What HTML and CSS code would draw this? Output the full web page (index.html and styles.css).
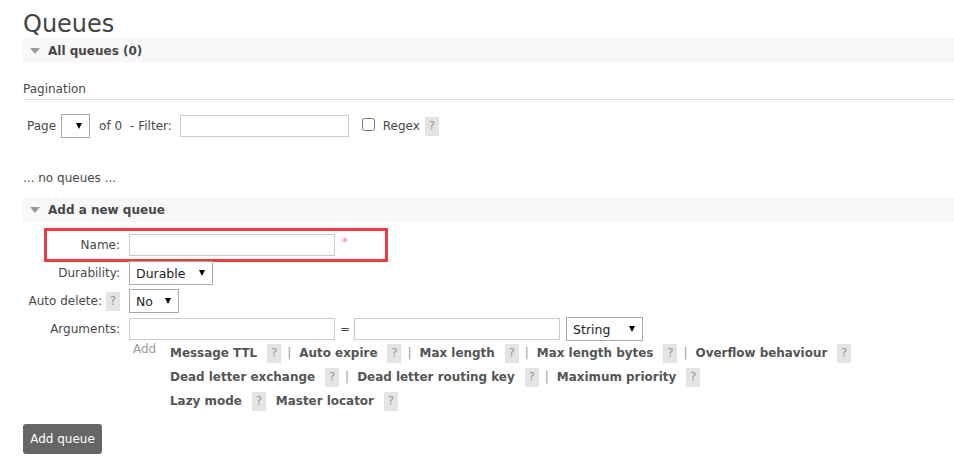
FILE: index.html
```html
<!DOCTYPE html>
<html>
<head>
<meta charset="utf-8">
<link rel="stylesheet" href="styles.css">
</head>
<body>
<div class="page">
  <h1 class="title">Queues</h1>
  <h2 class="bar"><span class="tri"></span>All queues (0)</h2>
  <div class="section">
    <h3 class="pag-head">Pagination</h3>
    <div class="pag-row">
      <span class="lbl">Page</span>
      <span class="sel sel-page"><select class="select"><option></option></select></span>
      <span class="lbl of">of 0</span>
      <span class="lbl">- Filter:</span>
      <input class="input filter" type="text">
      <input class="check" type="checkbox">
      <span class="lbl regex">Regex</span>
      <span class="help">?</span>
    </div>
    <p class="empty">... no queues ...</p>
  </div>
  <h2 class="bar bar2"><span class="tri"></span>Add a new queue</h2>
  <div class="form">
    <div class="highlight"></div>
    <div class="row">
      <div class="label">Name:</div>
      <div class="field"><input class="input wide" type="text"><span class="req">*</span></div>
    </div>
    <div class="row">
      <div class="label">Durability:</div>
      <div class="field"><span class="sel sel-dur"><select class="select"><option>Durable</option></select></span></div>
    </div>
    <div class="row">
      <div class="label">Auto delete: <span class="help">?</span></div>
      <div class="field"><span class="sel sel-no"><select class="select"><option>No</option></select></span></div>
    </div>
    <div class="row">
      <div class="label">Arguments:</div>
      <div class="field">
        <input class="input wide" type="text">
        <span class="eq">=</span>
        <input class="input wide" type="text">
        <span class="sel sel-str"><select class="select"><option>String</option></select></span>
      </div>
    </div>
    <div class="add-row">
      <div class="add">Add</div>
      <div class="links">
        <div class="line">
          <span class="link">Message TTL</span><span class="help">?</span><span class="sep">|</span>
          <span class="link">Auto expire</span><span class="help">?</span><span class="sep">|</span>
          <span class="link">Max length</span><span class="help">?</span><span class="sep">|</span>
          <span class="link">Max length bytes</span><span class="help">?</span><span class="sep">|</span>
          <span class="link">Overflow behaviour</span><span class="help">?</span>
        </div>
        <div class="line">
          <span class="link">Dead letter exchange</span><span class="help">?</span><span class="sep">|</span>
          <span class="link">Dead letter routing key</span><span class="help">?</span><span class="sep">|</span>
          <span class="link">Maximum priority</span><span class="help">?</span>
        </div>
        <div class="line">
          <span class="link">Lazy mode</span><span class="help">?</span>
          <span class="link">Master locator</span><span class="help">?</span>
        </div>
      </div>
    </div>
  </div>
  <button class="btn" type="button">Add queue</button>
</div>
</body>
</html>
```

FILE: styles.css
```css
html, body {
  margin: 0;
  padding: 0;
  background: #ffffff;
}
body {
  font-family: "DejaVu Sans", Verdana, sans-serif;
  font-size: 12px;
  color: #484848;
}
.page {
  padding: 9px 0 0 23px;
}
.title {
  margin: 0;
  font-size: 24px;
  font-weight: normal;
  line-height: 30px;
  color: #444;
}
.bar {
  margin: 0;
  height: 24px;
  line-height: 24px;
  background: #f8f8f8;
  font-size: 12px;
  font-weight: bold;
  color: #484848;
  display: flex;
  align-items: center;
}
.tri {
  width: 0;
  height: 0;
  border-left: 5px solid transparent;
  border-right: 5px solid transparent;
  border-top: 6px solid #999;
  margin: 0 8px 0 7px;
}
.section {
  padding-top: 19px;
}
.pag-head {
  margin: 0;
  font-size: 12px;
  font-weight: normal;
  line-height: 15px;
  padding-bottom: 2px;
  border-bottom: 1px solid #ddd;
}
.pag-row {
  display: flex;
  align-items: center;
  margin-top: 14px;
  padding-left: 4px;
  height: 24px;
}
.lbl {
  line-height: 15px;
}
.sel {
  position: relative;
  display: inline-block;
}
.sel::after {
  content: "";
  position: absolute;
  top: 9px;
  right: 8px;
  border-left: 3.5px solid transparent;
  border-right: 3.5px solid transparent;
  border-top: 6px solid #000;
  pointer-events: none;
}
.select {
  appearance: none;
  -webkit-appearance: none;
  display: block;
  height: 24px;
  border: 1px solid #a9a9a9;
  border-radius: 0;
  background: #fff;
  font-family: "DejaVu Sans", Verdana, sans-serif;
  font-size: 12.5px;
  color: #222;
  padding: 0 0 0 6px;
  margin: 0;
}
.sel-page { margin: 0 0 0 5px; }
.sel-page .select { width: 29px; }
.of { margin-left: 9px; }
.of + .lbl { margin-left: 8px; }
.input {
  box-sizing: border-box;
  height: 22px;
  border: 1px solid #ccc;
  border-radius: 0;
  margin: 0;
  padding: 0 4px;
  background: #fff;
}
.filter {
  width: 169px;
  margin-left: 8px;
}
.check {
  width: 13px;
  height: 13px;
  margin: 0 0 0 13px;
  position: relative;
  top: -2px;
}
.regex { margin-left: 8px; }
.help {
  display: inline-block;
  box-sizing: border-box;
  width: 14px;
  height: 19px;
  line-height: 19px;
  text-align: center;
  background: #e4e4e4;
  color: #999;
  font-size: 12px;
  font-weight: normal;
}
.regex + .help { margin-left: 5px; }
.empty {
  margin: 33px 0 0 0;
  line-height: 15px;
}
.bar2 {
  margin-top: 11px;
  height: 25px;
}
.form {
  position: relative;
  padding-top: 9px;
}
.highlight {
  position: absolute;
  left: 21px;
  top: 6px;
  width: 344px;
  height: 34px;
  box-sizing: border-box;
  border: 3px solid #f03c3c;
  pointer-events: none;
}
.row {
  display: grid;
  grid-template-columns: 97px 1fr;
  column-gap: 9px;
  align-items: center;
  height: 28px;
}
.label {
  text-align: right;
  display: flex;
  justify-content: flex-end;
  align-items: center;
  gap: 4px;
}
.field {
  display: flex;
  align-items: center;
}
.wide { width: 206px; }
.req {
  color: #f88;
  margin-left: 7px;
  position: relative;
  top: -3px;
}
.sel-dur .select { width: 84px; }
.sel-no .select { width: 50px; }
.sel-str .select { width: 77px; }
.eq { margin: 0 4px 0 5px; }
.sel-str { margin-left: 6px; }
.add-row {
  display: flex;
  padding-left: 110px;
  margin-top: -2px;
}
.add {
  color: #999;
  width: 37px;
  line-height: 16px;
}
.links {
  display: flex;
  flex-direction: column;
}
.line {
  display: flex;
  align-items: center;
  height: 24px;
}
.link {
  font-weight: bold;
  font-size: 11.95px;
  color: #555;
}
.link + .help { margin-left: 10px; }
.sep {
  color: #999;
  margin: 0 8px 0 6px;
}
.help + .link { margin-left: 10px; }
.btn {
  display: block;
  margin-top: 11px;
  width: 79px;
  height: 30px;
  background: #666;
  color: #fff;
  border: none;
  border-radius: 3px;
  font-family: "DejaVu Sans", Verdana, sans-serif;
  font-size: 12px;
  padding: 0;
}
```
